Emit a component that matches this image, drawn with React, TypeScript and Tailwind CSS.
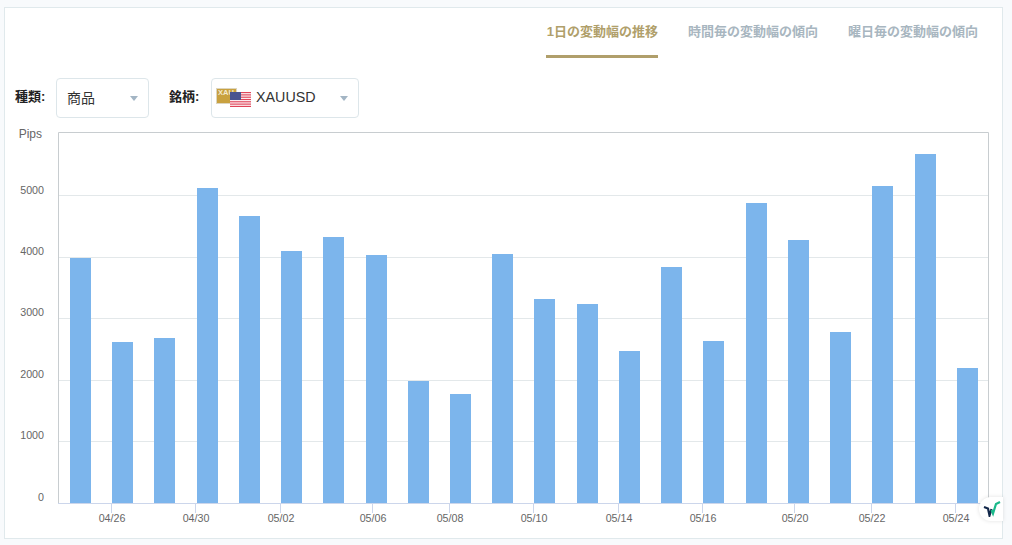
const FONT = "font-['Liberation_Sans','Noto_Sans_CJK_JP',sans-serif]";

const tops = [258, 342, 338, 188, 216, 251, 237, 255, 381, 394, 254, 299, 304, 351, 267, 341, 203, 240, 332, 186, 154, 368];
const lefts = [70, 112, 154, 197, 239, 281, 323, 366, 408, 450, 492, 534, 577, 619, 661, 703, 746, 788, 830, 872, 915, 957];
const grid = [195, 257, 318, 380, 441];
const yLabels: [string, number][] = [["5000", 194], ["4000", 255], ["3000", 316], ["2000", 378], ["1000", 439], ["0", 501]];
const xLabels: [string, number][] = [["04/26", 111.5], ["04/30", 195.5], ["05/02", 280.5], ["05/06", 372.5], ["05/08", 449.5], ["05/10", 533.5], ["05/14", 618.5], ["05/16", 702.5], ["05/20", 794.5], ["05/22", 871.5], ["05/24", 955.5]];

function Caret() {
  return <span className="w-0 h-0 border-x-[4px] border-x-transparent border-t-[5px] border-t-[#a3b5c4]" />;
}

function Flags() {
  return (
    <svg width="36" height="20" viewBox="0 0 36 20" className="shrink-0">
      <rect x="0.5" y="0.5" width="20" height="15" fill="#c9a13f" stroke="#ddd6c0" />
      <text x="2" y="7" fontSize="7.5" fontWeight="700" fill="#f4ead0" fontFamily="Liberation Sans">XAU</text>
      <rect x="14" y="4" width="21" height="15" fill="#fff" />
      {[4, 6.3, 8.6, 10.9, 13.2, 15.5, 17.8].map((y) => (
        <rect key={y} x="14" y={y} width="21" height="1.2" fill="#e0455a" />
      ))}
      <rect x="14" y="4" width="11" height="8" fill="#4a5590" />
    </svg>
  );
}

function Chart() {
  return (
    <svg width="1000" height="420" viewBox="0 0 1000 420" className="block" fontFamily="Liberation Sans">
      {grid.map((y) => (
        <line key={y} x1="58" x2="988" y1={y - 125 + 0.5} y2={y - 125 + 0.5} stroke="#e3e8ea" />
      ))}
      {tops.map((t, i) => (
        <rect key={i} x={lefts[i]} y={t - 125} width="21" height={503 - t} fill="#7cb5ec" />
      ))}
      <path d="M58.5 7.5H988.5V378" fill="none" stroke="#c8cdd0" />
      <path d="M58.5 7.5V378" fill="none" stroke="#c8cdd0" />
      <line x1="58" x2="988" y1="378.5" y2="378.5" stroke="#ccd6eb" />
      {xLabels.map(([l, x]) => (
        <g key={l}>
          <line x1={x} x2={x} y1="379" y2="388" stroke="#ccd6eb" />
          <text x={x + 0.5} y="397" textAnchor="middle" fontSize="10.7" fill="#666">{l}</text>
        </g>
      ))}
      <text x="42" y="13" textAnchor="end" fontSize="12" fill="#666">Pips</text>
      {yLabels.map(([l, y]) => (
        <text key={l} x="44" y={y - 125} textAnchor="end" fontSize="10.7" fill="#666">{l}</text>
      ))}
    </svg>
  );
}

export default function App() {
  return (
    <div className={`relative w-[1012px] h-[545px] overflow-hidden bg-[#f8fafc] pl-[4px] pt-[7px] ${FONT}`}>
      <div className="w-[999px] h-[532px] bg-white border border-[#e0e9ec] flex flex-col">
        <div className="flex justify-end gap-[30px] pr-[24px] h-[50px] text-[13px] font-bold">
          <div className="h-[50px] pt-[14px] pl-[1px] -ml-[1px] text-[#b09f6b] border-b-[3px] border-[#b09f6b]">1日の変動幅の推移</div>
          <div className="pt-[14px] text-[#a8b6c0]">時間毎の変動幅の傾向</div>
          <div className="pt-[14px] text-[#a8b6c0]">曜日毎の変動幅の傾向</div>
        </div>
        <div className="flex items-center h-[40px] mt-[20px] text-[#222]">
          <span className="ml-[10px] w-[41px] text-[13px] font-bold -mt-[2px]">種類:</span>
          <div className="w-[93px] h-[40px] flex items-center justify-between pl-[10px] pr-[10px] border border-[#dde6ea] rounded-[4px] text-[14px] text-[#333]">
            <span>商品</span>
            <Caret />
          </div>
          <span className="ml-[20px] w-[42px] text-[13px] font-bold -mt-[2px]">銘柄:</span>
          <div className="w-[148px] h-[40px] flex items-center pl-[4px] pr-[10px] border border-[#dde6ea] rounded-[4px] text-[14px] text-[#333]">
            <Flags />
            <span className="ml-[4px] text-[14.3px]">XAUUSD</span>
            <span className="ml-auto flex"><Caret /></span>
          </div>
        </div>
        <div className="-ml-[5px] mt-[7px]">
          <Chart />
        </div>
      </div>
      <div className="absolute left-[979px] top-[497px] w-[24px] h-[24px] bg-white rounded-l-[12px] shadow-[0_0_4px_rgba(0,0,0,0.12)] flex items-center justify-center pl-[2px]">
        <svg width="18" height="16" viewBox="0 0 18 16">
          <path d="M1 6l4 1.5 1.5 7 2-6.5" fill="none" stroke="#13284b" strokeWidth="2.2" />
          <path d="M8.5 9l1.5 3.5 3-9.5 4-2" fill="none" stroke="#1bb98a" strokeWidth="2.2" />
        </svg>
      </div>
    </div>
  );
}
